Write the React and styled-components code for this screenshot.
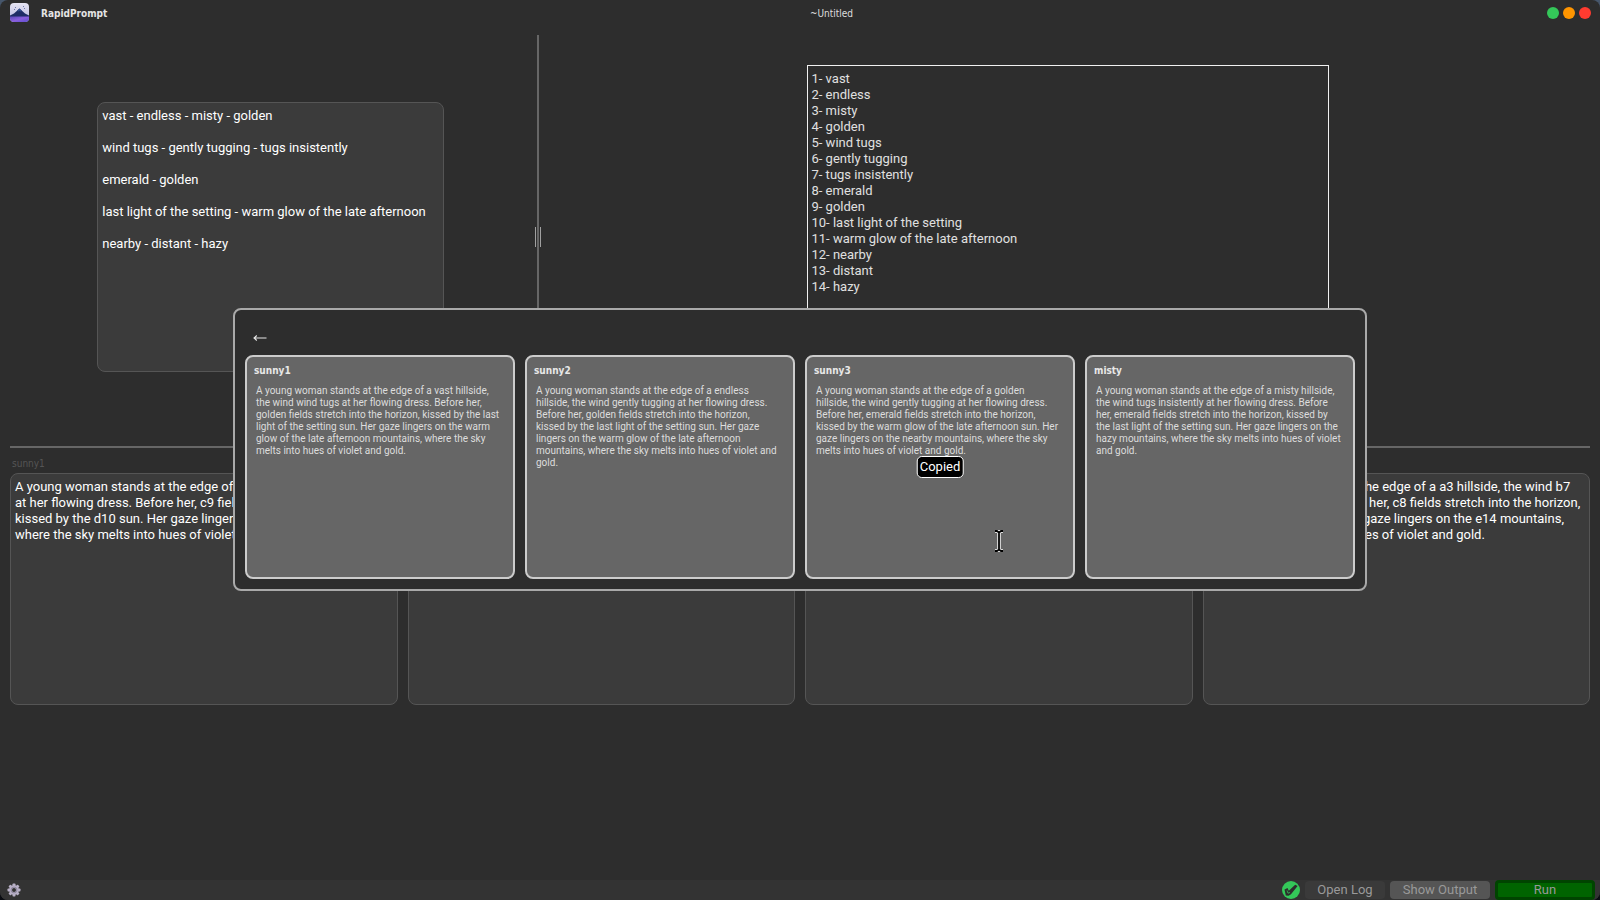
import React from "react";
import styled, { createGlobalStyle } from "styled-components";

const GlobalStyle = createGlobalStyle`
  * { box-sizing: border-box; }
  body {
    margin: 0;
    background: linear-gradient(#46566b, #0a0c12);
    font-family: Roboto, Tahoma, sans-serif;
    font-size: 13px;
    line-height: 16px;
    color: #dddddd;
  }
  button, textarea { font: inherit; }
`;

const headingFont = '"DejaVu Sans Condensed", "DejaVu Sans", Tahoma, sans-serif';

const Window = styled.div`
  position: relative;
  display: flex;
  flex-direction: column;
  min-height: 100vh;
  background: #2d2d2d;
  border-radius: 8px;
  overflow: hidden;
`;

const TitleBar = styled.header`
  display: grid;
  grid-template-columns: 1fr auto 1fr;
  align-items: center;
  height: 25px;
  padding: 0 9px 0 10px;
`;

const Brand = styled.div`
  display: flex;
  align-items: center;
  gap: 12px;
`;

const BrandName = styled.h1`
  margin: 0;
  padding-top: 2px;
  font-family: ${headingFont};
  font-size: 10px;
  font-weight: bold;
  line-height: 12px;
  color: #e4e4e4;
`;

const DocumentName = styled.span`
  padding: 2px 0 0 62px;
  font-family: ${headingFont};
  font-size: 10px;
  line-height: 12px;
`;

const WindowButtons = styled.div`
  display: flex;
  justify-content: flex-end;
  gap: 4px;
`;

const WindowButton = styled.button`
  width: 12px;
  height: 12px;
  padding: 0;
  border: 0;
  border-radius: 50%;
  background: ${(p) => p.$color};
`;

const Workspace = styled.main`
  flex: 1;
  display: flex;
  flex-direction: column;
  padding: 10px 10px 0;
`;

const TopRow = styled.section`
  display: grid;
  grid-template-columns: 533fr 2px 1057fr;
  height: 403px;
  margin: 0 -6px;
`;

const Pane = styled.div`
  display: flex;
  align-items: center;
  justify-content: center;
`;

const Editor = styled.textarea`
  display: block;
  width: ${(p) => p.$width || "100%"};
  height: ${(p) => p.$height};
  padding: 5px 4px;
  border: 1px solid #555555;
  border-radius: 8px;
  background: #3b3b3b;
  color: #ffffff;
  line-height: 16px;
  white-space: pre;
  resize: none;
  overflow: hidden;
  outline: none;
`;

const KeywordList = styled.ol`
  width: 522px;
  max-width: 100%;
  height: 343px;
  margin: 0;
  padding: 5px 4px;
  border: 1px solid #f0f0f0;
  list-style: none;
  color: #e0e0e0;
`;

const VerticalSplitter = styled.div`
  display: flex;
  align-items: center;
  justify-content: center;
  background: #666666;
`;

const Grip = styled.span`
  flex: none;
  width: 6px;
  height: 20px;
  border: solid #a0a0a0;
  border-width: 0 1px;
`;

const HorizontalSplitter = styled.div`
  height: 2px;
  margin-top: 8px;
  background: #666666;
`;

const TemplateRow = styled.section`
  display: grid;
  grid-template-columns: repeat(4, 1fr);
  gap: 10px;
  padding-top: 9px;
`;

const Template = styled.div`
  display: flex;
  flex-direction: column;
  gap: 2px;
`;

const TemplateLabel = styled.label`
  height: 14px;
  padding-left: 2px;
  font-family: ${headingFont};
  font-size: 10px;
  line-height: 14px;
  color: #555555;
`;

const StatusBar = styled.footer`
  display: flex;
  align-items: center;
  justify-content: space-between;
  height: 20px;
  padding: 0 5px;
  background: #333333;
`;

const SettingsButton = styled.button`
  display: flex;
  padding: 2px;
  border: 0;
  background: none;
`;

const StatusActions = styled.div`
  display: flex;
  align-items: center;
  gap: 5px;
`;

const ActionButton = styled.button`
  width: ${(p) => p.$width};
  height: 18px;
  padding: 0;
  border: 0;
  border-radius: 4px;
  background: ${(p) => p.$background};
  line-height: 18px;
  color: #999999;
`;

const RunButton = styled(ActionButton)`
  height: 20px;
  border: 3px solid #004400;
  line-height: 14px;
`;

const Overlay = styled.div`
  position: absolute;
  inset: 0;
  display: flex;
  align-items: center;
  justify-content: center;
  padding-bottom: 1px;
`;

const Dialog = styled.section`
  width: 100%;
  max-width: 1134px;
  padding: 10px;
  border: 2px solid #a9a9a9;
  border-radius: 8px;
  background: #2d2d2d;
`;

const BackButton = styled.button`
  display: flex;
  align-items: center;
  height: 35px;
  padding: 0 8px;
  border: 0;
  background: none;
`;

const CardRow = styled.div`
  display: grid;
  grid-template-columns: repeat(4, 1fr);
  gap: 10px;
`;

const Card = styled.article`
  position: relative;
  height: 224px;
  padding: 8px 7px;
  border: 2px solid #cccccc;
  border-radius: 8px;
  background: #666666;
  font-size: 10px;
  line-height: 12px;
`;

const CardTitle = styled.h2`
  margin: 0;
  font-family: ${headingFont};
  font-size: 10px;
  line-height: 12px;
  color: #e8e8e8;
`;

const CardText = styled.p`
  margin: 8px 0 0 2px;
  white-space: pre;
  color: #dddddd;
`;

const Tooltip = styled.span`
  position: absolute;
  top: 99px;
  left: 50%;
  transform: translateX(-50%);
  padding: 2px;
  border: 1px solid #ffffff;
  border-radius: 5px;
  background: #000000;
  font-size: 13px;
  line-height: 16px;
  color: #ffffff;
`;

const CursorHolder = styled.span`
  position: absolute;
  top: 173px;
  left: 187px;
  line-height: 0;
`;

const Logo = () => (
  <svg width="19" height="19" viewBox="0 0 19 19" aria-hidden="true">
    <defs>
      <linearGradient id="sky" x1="0" y1="0" x2="0" y2="1">
        <stop offset="0" stopColor="#e6e4f2" />
        <stop offset="1" stopColor="#b4b4de" />
      </linearGradient>
      <linearGradient id="field" x1="0" y1="0" x2="1" y2="1">
        <stop offset="0" stopColor="#5a48b8" />
        <stop offset="0.5" stopColor="#8a5fdc" />
        <stop offset="1" stopColor="#5b4bd0" />
      </linearGradient>
      <clipPath id="tile">
        <rect width="19" height="19" rx="4" />
      </clipPath>
    </defs>
    <g clipPath="url(#tile)">
      <rect width="19" height="19" fill="url(#sky)" />
      <path d="M0 12.500 4 10.500 9.500 5.500 15 10.500 19 12.500v2H0z" fill="#1f2d66" />
      <path d="M9.500 5.500 12 8 10.500 8.500 9.500 7.800 8.500 8.500 7 8z" fill="#34508e" />
      <path d="M0 13.500h19V19H0z" fill="url(#field)" />
      <path d="M5 4h1v1H5zM13 3h1v1h-1zM4 6h1v1H4zM14 5h1v1h-1z" fill="#6f78a8" />
    </g>
  </svg>
);

const Gear = () => (
  <svg width="14" height="14" viewBox="0 0 14 14" aria-hidden="true">
    <g fill="#b8b0c6">
      {[0, 45, 90, 135].map((a) => (
        <rect key={a} x="5.500" y="0.500" width="3" height="13" rx="0.800" transform={`rotate(${a} 7 7)`} />
      ))}
      <circle cx="7" cy="7" r="4.800" />
    </g>
    <circle cx="7" cy="7" r="2.900" fill="none" stroke="#8f879f" />
    <circle cx="7" cy="7" r="2" fill="#333333" />
  </svg>
);

const ReadyMark = () => (
  <svg width="18" height="18" viewBox="0 0 18 18" role="img" aria-label="Ready">
    <circle cx="9" cy="9" r="9" fill="#34c759" />
    <path d="M2.500 8.500 5.500 7 6.800 9.800 13.200 3.800 15.600 5 9 13.200 6.500 14.800 3.800 14.500z" fill="#2d2d2d" />
    <path d="M5 9.500 6 12.200 8 11.500" fill="none" stroke="#34c759" strokeWidth="0.800" />
  </svg>
);

const BackArrow = () => (
  <svg width="14" height="8" viewBox="0 0 14 8" aria-hidden="true">
    <path d="M1 4h12.500M3.800 1.500 1 4l2.800 2.500" fill="none" stroke="#e6e6e6" strokeWidth="1.100" />
  </svg>
);

const TextCursor = () => (
  <svg width="10" height="22" viewBox="0 0 10 22" aria-hidden="true">
    <path d="M1 1h2l2 1.500L7 1h2M1 21h2l2-1.500L7 21h2M5 2v18" fill="none" stroke="#ffffff" strokeWidth="3.400" />
    <path d="M1 1h2l2 1.500L7 1h2M1 21h2l2-1.500L7 21h2M5 2v18" fill="none" stroke="#000000" strokeWidth="1.800" />
  </svg>
);

const groups = [
  "vast - endless - misty - golden",
  "wind tugs - gently tugging - tugs insistently",
  "emerald - golden",
  "last light of the setting - warm glow of the late afternoon",
  "nearby - distant - hazy",
];

const keywords = groups.flatMap((group) => group.split(" - "));

const templates = [
  {
    name: "sunny1",
    text: `A young woman stands at the edge of a a1 hillside, the wind b5
at her flowing dress. Before her, c9 fields stretch into the horizon,
kissed by the d10 sun. Her gaze lingers on the e11 mountains,
where the sky melts into hues of violet and gold.`,
  },
  { name: "sunny2", text: "" },
  { name: "sunny3", text: "" },
  {
    name: "misty",
    text: `A young woman stands at the edge of a a3 hillside, the wind b7
at her flowing dress. Before her, c8 fields stretch into the horizon,
kissed by the d10 sun. Her gaze lingers on the e14 mountains,
where the sky melts into hues of violet and gold.`,
  },
];

const results = [
  {
    name: "sunny1",
    text: `A young woman stands at the edge of a vast hillside,
the wind wind tugs at her flowing dress. Before her,
golden fields stretch into the horizon, kissed by the last
light of the setting sun. Her gaze lingers on the warm
glow of the late afternoon mountains, where the sky
melts into hues of violet and gold.`,
  },
  {
    name: "sunny2",
    text: `A young woman stands at the edge of a endless
hillside, the wind gently tugging at her flowing dress.
Before her, golden fields stretch into the horizon,
kissed by the last light of the setting sun. Her gaze
lingers on the warm glow of the late afternoon
mountains, where the sky melts into hues of violet and
gold.`,
  },
  {
    name: "sunny3",
    copied: true,
    text: `A young woman stands at the edge of a golden
hillside, the wind gently tugging at her flowing dress.
Before her, emerald fields stretch into the horizon,
kissed by the warm glow of the late afternoon sun. Her
gaze lingers on the nearby mountains, where the sky
melts into hues of violet and gold.`,
  },
  {
    name: "misty",
    text: `A young woman stands at the edge of a misty hillside,
the wind tugs insistently at her flowing dress. Before
her, emerald fields stretch into the horizon, kissed by
the last light of the setting sun. Her gaze lingers on the
hazy mountains, where the sky melts into hues of violet
and gold.`,
  },
];

export default function App() {
  return (
    <>
      <GlobalStyle />
      <Window>
        <TitleBar>
          <Brand>
            <Logo />
            <BrandName>RapidPrompt</BrandName>
          </Brand>
          <DocumentName>~Untitled</DocumentName>
          <WindowButtons>
            <WindowButton $color="#34c759" aria-label="Minimize" />
            <WindowButton $color="#ff9500" aria-label="Maximize" />
            <WindowButton $color="#ff3b30" aria-label="Close" />
          </WindowButtons>
        </TitleBar>

        <Workspace>
          <TopRow>
            <Pane>
              <Editor
                $width="65%"
                $height="270px"
                aria-label="Keyword groups"
                spellCheck={false}
                defaultValue={groups.join("\n\n")}
              />
            </Pane>
            <VerticalSplitter role="separator" aria-orientation="vertical">
              <Grip />
            </VerticalSplitter>
            <Pane>
              <KeywordList>
                {keywords.map((word, i) => (
                  <li key={i}>{`${i + 1}- ${word}`}</li>
                ))}
              </KeywordList>
            </Pane>
          </TopRow>

          <HorizontalSplitter role="separator" />

          <TemplateRow>
            {templates.map((t) => (
              <Template key={t.name}>
                <TemplateLabel htmlFor={`template-${t.name}`}>{t.name}</TemplateLabel>
                <Editor
                  id={`template-${t.name}`}
                  $height="232px"
                  spellCheck={false}
                  defaultValue={t.text}
                />
              </Template>
            ))}
          </TemplateRow>
        </Workspace>

        <StatusBar>
          <SettingsButton aria-label="Settings">
            <Gear />
          </SettingsButton>
          <StatusActions>
            <ReadyMark />
            <ActionButton $width="80px" $background="#3a3a3a">Open Log</ActionButton>
            <ActionButton $width="100px" $background="#555555">Show Output</ActionButton>
            <RunButton $width="100px" $background="#006400">Run</RunButton>
          </StatusActions>
        </StatusBar>

        <Overlay>
          <Dialog role="dialog" aria-label="Results">
            <BackButton aria-label="Back">
              <BackArrow />
            </BackButton>
            <CardRow>
              {results.map((r) => (
                <Card key={r.name}>
                  <CardTitle>{r.name}</CardTitle>
                  <CardText>{r.text}</CardText>
                  {r.copied && (
                    <>
                      <Tooltip role="status">Copied</Tooltip>
                      <CursorHolder>
                        <TextCursor />
                      </CursorHolder>
                    </>
                  )}
                </Card>
              ))}
            </CardRow>
          </Dialog>
        </Overlay>
      </Window>
    </>
  );
}
